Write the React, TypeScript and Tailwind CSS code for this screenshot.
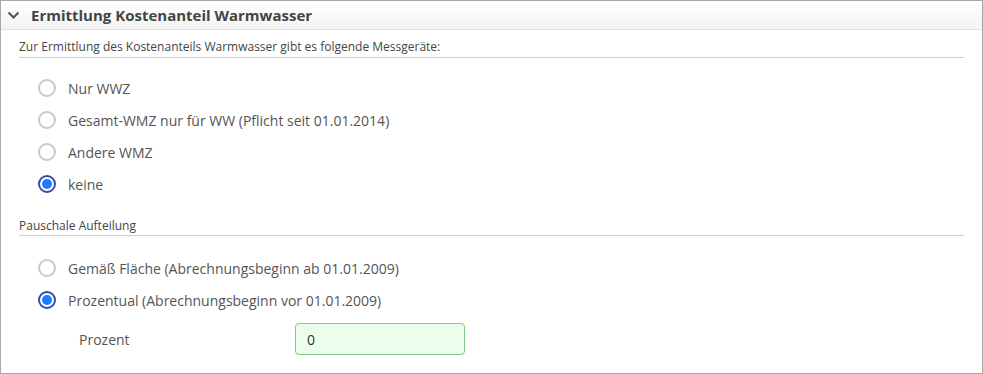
const font = { fontFamily: '"Open Sans", "Liberation Sans", sans-serif' };

type Opt = { label: string; checked?: boolean };

const messgeraete: Opt[] = [
  { label: 'Nur WWZ' },
  { label: 'Gesamt-WMZ nur für WW (Pflicht seit 01.01.2014)' },
  { label: 'Andere WMZ' },
  { label: 'keine', checked: true },
];

const pauschal: Opt[] = [
  { label: 'Gemäß Fläche (Abrechnungsbeginn ab 01.01.2009)' },
  { label: 'Prozentual (Abrechnungsbeginn vor 01.01.2009)', checked: true },
];

function Radio({ checked }: { checked?: boolean }) {
  if (checked) {
    return (
      <span className="w-[18px] h-[18px] rounded-full border-2 border-[#3949ab] flex items-center justify-center bg-white">
        <span className="w-[10px] h-[10px] rounded-full bg-[#1a7cff]" />
      </span>
    );
  }
  return <span className="w-[18px] h-[18px] rounded-full border-2 border-[#cacaca] bg-white" />;
}

function RadioRow({ opt }: { opt: Opt }) {
  return (
    <div className="h-[32px] flex items-center gap-[12px] pl-[19px] cursor-pointer">
      <Radio checked={opt.checked} />
      <span className="text-[14px] text-[#555]">{opt.label}</span>
    </div>
  );
}

export default function App() {
  return (
    <div className="w-[983px] h-[374px] bg-white" style={font}>
      <div className="w-full h-full border border-[#a8a8a8] flex flex-col">
        {/* Header */}
        <div className="h-[29px] shrink-0 flex items-center bg-gradient-to-b from-white to-[#f4f4f4] border-b border-[#e2e2e2]">
          <svg width="13" height="9" viewBox="0 0 13 9" className="ml-[6px] mr-[11px]">
            <polyline points="1.5,1.5 6.5,6.5 11.5,1.5" fill="none" stroke="#555" strokeWidth="2.2" />
          </svg>
          <span className="text-[15px] font-bold text-[#444]">Ermittlung Kostenanteil Warmwasser</span>
        </div>

        {/* Content */}
        <div className="px-[18px]">
          <div className="mt-[9px] pb-[2px] leading-[16px] text-[12px] text-[#444] border-b border-[#cfcfcf]">
            Zur Ermittlung des Kostenanteils Warmwasser gibt es folgende Messgeräte:
          </div>
          <div className="mt-[14px]">
            {messgeraete.map((o) => (
              <RadioRow key={o.label} opt={o} />
            ))}
          </div>

          <div className="mt-[18px] pb-[1px] leading-[16px] text-[12px] text-[#444] border-b border-[#cfcfcf]">
            Pauschale Aufteilung
          </div>
          <div className="mt-[16px]">
            {pauschal.map((o) => (
              <RadioRow key={o.label} opt={o} />
            ))}
          </div>

          <div className="mt-[7px] flex items-center pl-[60px]">
            <span className="w-[216px] text-[14px] text-[#555]">Prozent</span>
            <div className="w-[170px] h-[32px] rounded-[4px] border border-[#85c98a] bg-[#ebfdec] flex items-center pl-[11px] text-[14px] text-[#333]">
              0
            </div>
          </div>
        </div>
      </div>
    </div>
  );
}
